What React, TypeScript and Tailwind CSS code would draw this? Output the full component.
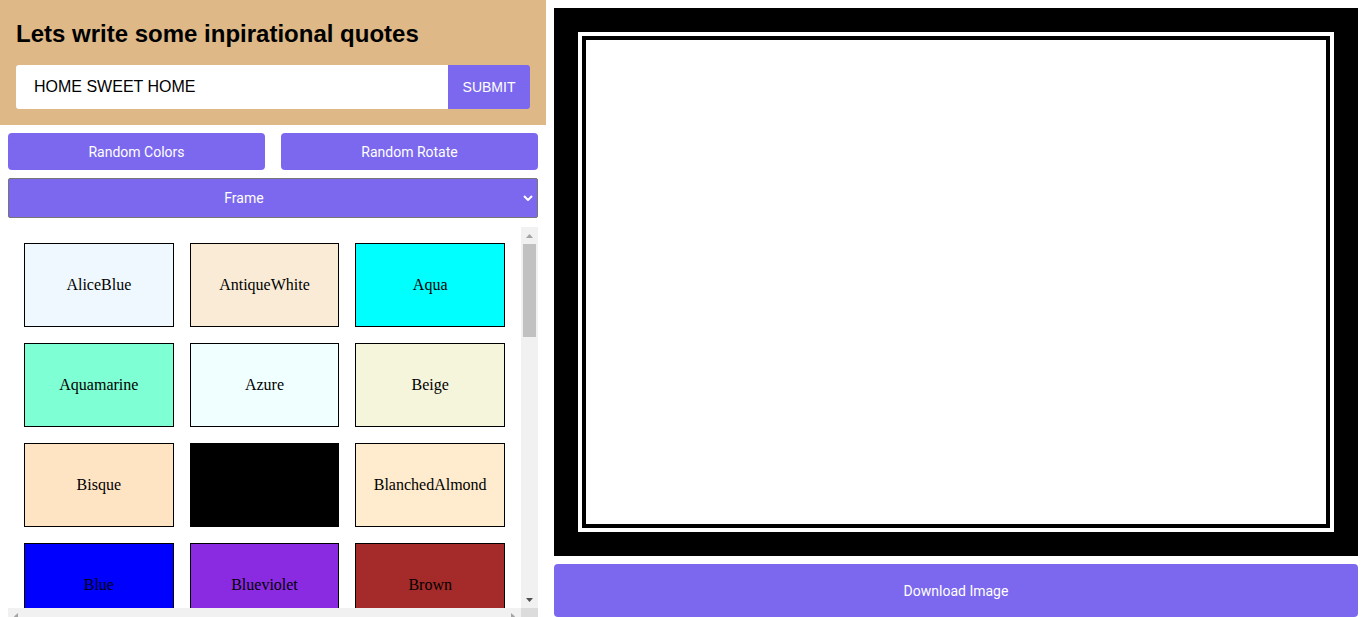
const COLORS: { name: string; hex: string }[] = [
  { name: "AliceBlue", hex: "#f0f8ff" },
  { name: "AntiqueWhite", hex: "#faebd7" },
  { name: "Aqua", hex: "#00ffff" },
  { name: "Aquamarine", hex: "#7fffd4" },
  { name: "Azure", hex: "#f0ffff" },
  { name: "Beige", hex: "#f5f5dc" },
  { name: "Bisque", hex: "#ffe4c4" },
  { name: "Black", hex: "#000000" },
  { name: "BlanchedAlmond", hex: "#ffebcd" },
  { name: "Blue", hex: "#0000ff" },
  { name: "Blueviolet", hex: "#8a2be2" },
  { name: "Brown", hex: "#a52a2a" },
  { name: "BurlyWood", hex: "#deb887" },
  { name: "CadetBlue", hex: "#5f9ea0" },
  { name: "Chartreuse", hex: "#7fff00" },
];

function Arrow({ dir, dark }: { dir: "up" | "down" | "left" | "right"; dark?: boolean }) {
  const pts =
    dir === "up" ? "0,4 3.5,0 7,4" : dir === "down" ? "0,0 7,0 3.5,4" : dir === "left" ? "4,0 4,7 0,3.5" : "0,0 4,3.5 0,7";
  const vertical = dir === "up" || dir === "down";
  return (
    <svg width={vertical ? 7 : 4} height={vertical ? 4 : 7} viewBox={vertical ? "0 0 7 4" : "0 0 4 7"}>
      <polygon points={pts} fill={dark ? "#505050" : "#a3a3a3"} />
    </svg>
  );
}

export default function App() {
  return (
    <div className="flex h-[617px] overflow-hidden bg-white" style={{ fontFamily: "'Liberation Sans', Arial, sans-serif" }}>
      {/* ── Left panel ── */}
      <div className="w-[546px] shrink-0 flex flex-col">
        <div className="bg-[#deb887] px-4 pt-[18px] pb-4">
          <h1 className="text-2xl font-bold leading-8 text-black">Lets write some inpirational quotes</h1>
          <div className="flex mt-[15px] h-[44px]">
            <input
              defaultValue="HOME SWEET HOME"
              className="flex-1 bg-white rounded-l-[3px] pl-[18px] text-base text-black outline-none"
            />
            <button className="w-[82px] bg-[#7b68ee] rounded-r-[3px] text-white text-sm">SUBMIT</button>
          </div>
        </div>

        <div className="px-2 pt-2 flex flex-col">
          <div className="grid grid-cols-2 gap-4">
            <button className="h-[37px] rounded bg-[#7b68ee] text-white text-sm font-['Roboto',sans-serif]">
              Random Colors
            </button>
            <button className="h-[37px] rounded bg-[#7b68ee] text-white text-sm font-['Roboto',sans-serif]">
              Random Rotate
            </button>
          </div>
          <div className="relative mt-2">
            <select className="w-full h-10 appearance-none border border-[#767676] rounded-[2px] bg-[#7b68ee] pr-[58px] text-white text-sm text-center [text-align-last:center] font-['Roboto',sans-serif] outline-none">
              <option>Frame</option>
            </select>
            <svg className="absolute right-[5px] top-[17px] pointer-events-none" width="10" height="6" viewBox="0 0 10 6">
              <polyline points="1,1 5,5 9,1" fill="none" stroke="white" strokeWidth="2" />
            </svg>
          </div>

          {/* colour list with its scrollbars */}
          <div className="mt-[9px] h-[398px] flex flex-col">
            <div className="flex flex-1 min-h-0">
              <div className="flex-1 overflow-hidden">
                <div className="grid grid-cols-3 gap-4 p-4">
                  {COLORS.map((c) => (
                    <div
                      key={c.name}
                      className="h-[84px] border border-black flex items-center justify-center text-base text-black font-['Liberation_Serif','Times_New_Roman',serif]"
                      style={{ background: c.hex }}
                    >
                      {c.name}
                    </div>
                  ))}
                </div>
              </div>
              <div className="w-[17px] bg-[#f1f1f1] flex flex-col items-center">
                <div className="h-[17px] flex items-center justify-center">
                  <Arrow dir="up" />
                </div>
                <div className="w-[13px] h-[93px] bg-[#c1c1c1]" />
                <div className="flex-1" />
                <div className="h-[17px] flex items-center justify-center">
                  <Arrow dir="down" dark />
                </div>
              </div>
            </div>
            <div className="h-[17px] flex shrink-0">
              <div className="flex-1 bg-[#f1f1f1] flex items-center justify-between px-[6px]">
                <Arrow dir="left" />
                <Arrow dir="right" />
              </div>
              <div className="w-[17px] bg-[#dcdcdc]" />
            </div>
          </div>
        </div>
      </div>

      {/* ── Right panel ── */}
      <div className="flex-1 flex flex-col pl-2 pr-1 pt-2">
        <div className="h-[548px] bg-black p-6 flex">
          <div className="flex-1 border-4 border-white flex">
            <div className="flex-1 border-4 border-black bg-white" />
          </div>
        </div>
        <button className="mt-2 h-[53px] shrink-0 rounded bg-[#7b68ee] text-white text-sm font-['Roboto',sans-serif]">
          Download Image
        </button>
      </div>
    </div>
  );
}
